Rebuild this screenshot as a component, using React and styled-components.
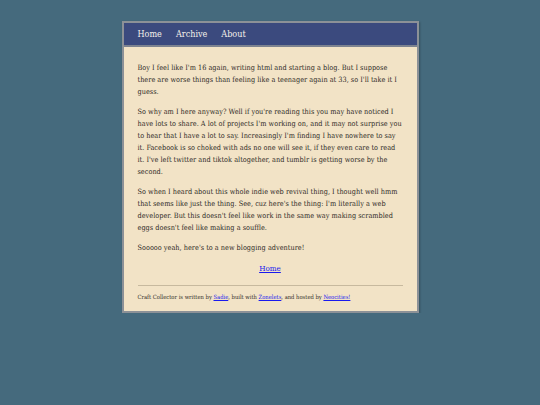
import React from "react";
import styled, { createGlobalStyle } from "styled-components";

const GlobalStyle = createGlobalStyle`
  html, body {
    margin: 0;
    padding: 0;
    background: #456a7d;
  }
  body {
    font-family: "DejaVu Serif", Georgia, serif;
    font-stretch: condensed;
  }
`;

const Page = styled.div`
  padding-top: 21px;
  display: flex;
  justify-content: center;
`;

const Box = styled.div`
  width: 293px;
  border: 2px solid #8c9197;
  background: #f2e3c6;
  box-shadow: 1px 1px 2px rgba(0, 0, 0, 0.25);
`;

const Nav = styled.nav`
  display: flex;
  gap: 14px;
  height: 22px;
  align-items: center;
  padding: 0 14px;
  background: #3b4a7e;
  border-bottom: 2px solid #7d8390;
`;

const NavLink = styled.a`
  color: #f4f1ea;
  font-size: 9px;
  text-decoration: none;
`;

const Content = styled.main`
  padding: 15px 14px 9px;
  color: #2f2b26;
  font-size: 7.3px;
  line-height: 12px;
`;

const Para = styled.p`
  margin: 0 0 8px;
`;

const Center = styled.p`
  text-align: center;
  margin: 9px 0 10px;
  font-size: 8px;
`;

const Link = styled.a`
  color: #1a1aee;
`;

const Rule = styled.hr`
  border: none;
  border-top: 1px solid #c7b99e;
  margin: 0 0 6px;
`;

const Footer = styled.footer`
  font-size: 5.8px;
  line-height: 10px;
`;

export default function App() {
  return (
    <>
      <GlobalStyle />
      <Page>
        <Box>
          <Nav>
            <NavLink href="#">Home</NavLink>
            <NavLink href="#">Archive</NavLink>
            <NavLink href="#">About</NavLink>
          </Nav>
          <Content>
            <Para>
              Boy I feel like I'm 16 again, writing html and starting a blog. But I suppose
              there are worse things than feeling like a teenager again at 33, so I'll take it I
              guess.
            </Para>
            <Para>
              So why am I here anyway? Well if you're reading this you may have noticed I
              have lots to share. A lot of projects I'm working on, and it may not surprise you
              to hear that I have a lot to say. Increasingly I'm finding I have nowhere to say
              it. Facebook is so choked with ads no one will see it, if they even care to read it.
              I've left twitter and tiktok altogether, and tumblr is getting worse by the
              second.
            </Para>
            <Para>
              So when I heard about this whole indie web revival thing, I thought well hmm
              that seems like just the thing. See, cuz here's the thing: I'm literally a web
              developer. But this doesn't feel like work in the same way making scrambled
              eggs doesn't feel like making a souffle.
            </Para>
            <Para>Sooooo yeah, here's to a new blogging adventure!</Para>
            <Center>
              <Link href="#">Home</Link>
            </Center>
            <Rule />
            <Footer>
              Craft Collector is written by <Link href="#">Sadie</Link>, built with{" "}
              <Link href="#">Zonelets</Link>, and hosted by <Link href="#">Neocities!</Link>
            </Footer>
          </Content>
        </Box>
      </Page>
    </>
  );
}
